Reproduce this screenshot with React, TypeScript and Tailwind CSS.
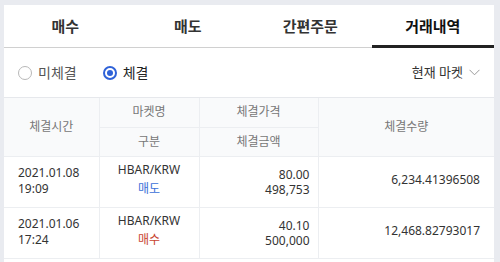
import React from 'react';

const tabs = ['매수', '매도', '간편주문', '거래내역'];

const rows = [
    { date: '2021.01.08', time: '19:09', market: 'HBAR/KRW', side: '매도', price: '80.00', amount: '498,753', qty: '6,234.41396508' },
    { date: '2021.01.06', time: '17:24', market: 'HBAR/KRW', side: '매수', price: '40.10', amount: '500,000', qty: '12,468.82793017' },
];

const App = () => {
    return (
        <div className="w-[500px] h-[262px] bg-[#e9ebf0] pt-[5px] pl-[4px] overflow-hidden" style={{ fontFamily: '"Noto Sans", "Noto Sans CJK KR", sans-serif' }}>
            <div className="w-[490px] h-[257px] bg-white">
                {/* tabs */}
                <div className="flex h-[43px] border-b border-[#d0d0d0]">
                    {tabs.map((tab, i) => (
                        <div key={i} className="relative flex-1 flex items-center justify-center">
                            <span className={i === 3 ? 'text-[15px] font-bold text-[#111]' : 'text-[15px] font-semibold text-[#333]'}>{tab}</span>
                            {i === 3 && <div className="absolute left-0 right-0 bottom-[-1px] h-[3px] bg-[#222]" />}
                        </div>
                    ))}
                </div>

                {/* filter row */}
                <div className="flex items-center h-[50px] pl-[14px] pr-[14px] border-b border-[#e6e8ec]">
                    <div className="flex items-center gap-[6px]">
                        <span className="w-[14px] h-[14px] rounded-full border-[1.5px] border-[#b8b8b8]" />
                        <span className="text-[14px] text-[#555]">미체결</span>
                    </div>
                    <div className="flex items-center gap-[6px] ml-[26px]">
                        <span className="w-[14px] h-[14px] rounded-full border-[2px] border-[#2f62d8] flex items-center justify-center">
                            <span className="w-[6px] h-[6px] rounded-full bg-[#2f62d8]" />
                        </span>
                        <span className="text-[14px] text-[#222]">체결</span>
                    </div>
                    <div className="ml-auto flex items-center gap-[6px] text-[13px] text-[#333]">
                        <span>현재 마켓</span>
                        <svg width="11" height="7" viewBox="0 0 11 7" fill="none" stroke="#999" strokeWidth="1">
                            <path d="M0.5 0.8 L5.5 5.8 L10.5 0.8" />
                        </svg>
                    </div>
                </div>

                {/* table */}
                <table className="w-[490px] border-collapse table-fixed text-[12px]">
                    <colgroup>
                        <col className="w-[95px]" />
                        <col className="w-[100px]" />
                        <col className="w-[119px]" />
                        <col className="w-[176px]" />
                    </colgroup>
                    <thead className="bg-[#f9fafb] text-[#777]">
                        <tr className="h-[29px]">
                            <th rowSpan={2} className="font-normal border-r border-b border-[#eceef1]">체결시간</th>
                            <th className="font-normal border-r border-b border-[#eceef1]">마켓명</th>
                            <th className="font-normal border-r border-b border-[#eceef1]">체결가격</th>
                            <th rowSpan={2} className="font-normal border-b border-[#eceef1]">체결수량</th>
                        </tr>
                        <tr className="h-[29px]">
                            <th className="font-normal border-r border-b border-[#eceef1]">구분</th>
                            <th className="font-normal border-r border-b border-[#eceef1]">체결금액</th>
                        </tr>
                    </thead>
                    <tbody className="text-[#333]">
                        {rows.map((row, i) => (
                            <tr key={i} className="h-[51px]">
                                <td className="pl-[14px] border-r border-b border-[#eceef1] leading-[16px] pb-[2px]">
                                    <div>{row.date}</div>
                                    <div>{row.time}</div>
                                </td>
                                <td className="text-center border-r border-b border-[#eceef1] leading-[19px] pb-[5px]">
                                    <div>{row.market}</div>
                                    <div className={row.side === '매도' ? 'text-[#3b6fd8]' : 'text-[#c8432f]'}>{row.side}</div>
                                </td>
                                <td className="text-right pr-[8px] border-r border-b border-[#eceef1] leading-[15px]">
                                    <div>{row.price}</div>
                                    <div>{row.amount}</div>
                                </td>
                                <td className="text-right pr-[14px] border-b border-[#eceef1] pb-[4px]">{row.qty}</td>
                            </tr>
                        ))}
                    </tbody>
                </table>
            </div>
        </div>
    );
};

export default App;
